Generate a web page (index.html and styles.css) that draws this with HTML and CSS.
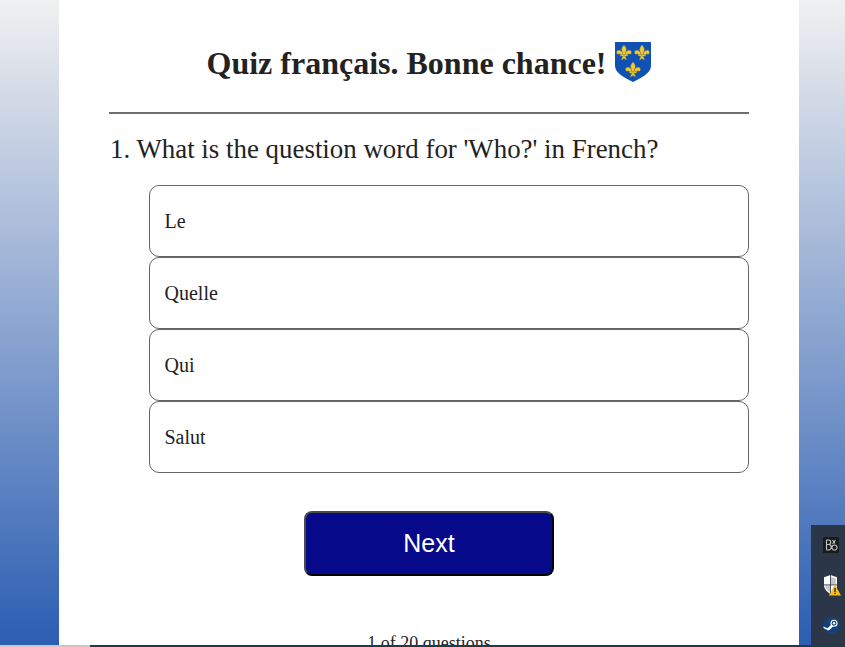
FILE: index.html
```html
<html lang="en">
  <head>
    <meta charset="UTF-8" />
    <title>Quiz français</title>
    <link rel="stylesheet" href="styles.css">
  </head>

  <body>
    <section class="quiz-container">
      <div class="quiz-container__heading">
        <h1>Quiz français. Bonne chance!</h1>
        <svg class="shield" viewBox="0 0 36 40" width="36" height="40">
          <defs>
            <g id="fleur" fill="#f0c92f" stroke="#a8872a" stroke-width="0.3">
              <path d="M0 -8 C2.6 -5.5 3 -3 1.3 0 L1.3 1.5 L-1.3 1.5 L-1.3 0 C-3 -3 -2.6 -5.5 0 -8 Z" />
              <path d="M-1.5 0.5 C-2.4 -3.4 -7.4 -3.8 -7.4 -0.6 C-7.4 1.2 -5.4 1.8 -4.7 0.6 C-4.4 2 -2.4 2 -1.5 1.2 Z" />
              <path d="M1.5 0.5 C2.4 -3.4 7.4 -3.8 7.4 -0.6 C7.4 1.2 5.4 1.8 4.7 0.6 C4.4 2 2.4 2 1.5 1.2 Z" />
              <path d="M-3.6 1.5 H3.6 V3 H-3.6 Z M-1.2 3 H1.2 L2.6 7 L0 5.6 L-2.6 7 Z" />
            </g>
          </defs>
          <path d="M0 0 H36 V24 C36 31 26 36 18 40 C10 36 0 31 0 24 Z" fill="#0f52b4" />
          <use href="#fleur" x="9" y="11" />
          <use href="#fleur" x="27" y="11" />
          <use href="#fleur" x="18" y="28" />
        </svg>
      </div>
      <hr class="divider" />
      <p class="question">1. What is the question word for 'Who?' in French?</p>
      <ul class="answers">
        <li class="answer">Le</li>
        <li class="answer">Quelle</li>
        <li class="answer">Qui</li>
        <li class="answer">Salut</li>
      </ul>
      <div class="actions">
        <button class="next-btn">Next</button>
      </div>
      <p class="progress">1 of 20 questions</p>
    </section>

    <div class="bottom-line"></div>

    <aside class="tray">
      <svg viewBox="0 0 16 16" width="16" height="16">
        <rect width="16" height="16" fill="#1b1b1d" />
        <path d="M3.5 3 V13 M3.5 3 H5.5 A2 2 0 0 1 5.5 7.5 H3.5 M5.5 7.5 A2.5 2.5 0 0 1 5.5 13 H3.5 M9.5 3 L12 6.5 M12.5 3 L9.5 7 M9 10.5 A2.5 2.5 0 1 0 14 10.5 A2.5 2.5 0 1 0 9 10.5" fill="none" stroke="#c4c4c4" stroke-width="1.1" />
      </svg>
      <svg viewBox="0 0 18 21" width="18" height="21">
        <path d="M7.5 0 L14 2.2 V10 C14 14 11 17 7.5 19 C4 17 1 14 1 10 V2.2 Z" fill="#fff" />
        <path d="M8 2 L12.8 3.4 V9.4 H8 Z M7 10.4 V17 C5 15.6 2.7 13.6 2.2 10.4 Z" fill="#28303e" opacity="0.28" />
        <path d="M7.5 0 V19 M1 9.9 H14" stroke="#1d2430" stroke-width="0.8" />
        <path d="M12 9.5 L18 20.5 H6 Z" fill="#f6bd1f" />
        <rect x="11.4" y="13" width="1.3" height="4" fill="#222" />
        <rect x="11.4" y="17.8" width="1.3" height="1.3" fill="#222" />
      </svg>
      <svg viewBox="0 0 17 17" width="17" height="17">
        <circle cx="8.5" cy="8.5" r="8.5" fill="#12427a" />
        <circle cx="11" cy="6.3" r="3" fill="none" stroke="#fff" stroke-width="1.1" />
        <circle cx="11" cy="6.3" r="1.2" fill="#fff" />
        <path d="M0.2 9.4 L4.6 11.2 L8.4 7.6 L10 9.6 L6.6 12.8 C5.4 13.8 4.2 13.2 3.6 12.4 L0.8 11.2 Z" fill="#fff" />
      </svg>
    </aside>
  </body>
</html>
```

FILE: styles.css
```css
* {
  box-sizing: border-box;
}
html,
body {
  height: 100%;
}
body {
  margin: 0;
  overflow: hidden;
  background: linear-gradient(to bottom, #f0f0f0 0%, #2a5db2 100%);
  font-family: "Liberation Serif", "Times New Roman", serif;
  color: #222;
}

.quiz-container {
  width: 740px;
  height: 100%;
  margin-left: 59px;
  padding: 0 50px;
  background-color: #fff;
}

.quiz-container__heading {
  display: flex;
  justify-content: center;
  align-items: flex-start;
  gap: 9px;
  padding-top: 42px;
}
.quiz-container__heading h1 {
  margin: 1px 0 0;
  font-size: 32px;
  line-height: 40px;
}

.divider {
  margin: 29px 0 0;
  border: 0;
  border-top: 2px solid #6e6e6e;
}

.question {
  margin: 18px 0 0;
  padding-left: 1px;
  font-size: 26.9px;
  line-height: 34px;
}

.answers {
  margin: 19px 0 0;
  padding: 0 0 0 40px;
  list-style: none;
}
.answer {
  display: flex;
  align-items: center;
  height: 72px;
  padding: 1px 0 0 14.5px;
  border: 1px solid #666;
  border-radius: 10px;
  font-size: 20px;
}

.actions {
  display: flex;
  justify-content: center;
  margin-top: 38px;
}
.next-btn {
  width: 250px;
  height: 65px;
  border: 2px solid;
  border-color: #4a4a4a #000 #000 #4a4a4a;
  border-radius: 8px;
  background-color: #060a8a;
  color: #fff;
  font-family: "Liberation Sans", Arial, sans-serif;
  font-size: 25px;
}

.progress {
  margin: 57px 0 0;
  text-align: center;
  font-size: 18px;
}

.bottom-line {
  position: fixed;
  left: 0;
  right: 0;
  bottom: 0;
  height: 2px;
  background: linear-gradient(to right, #c8c8c8 90px, #1f3a4a 90px);
}

.tray {
  position: fixed;
  right: 0;
  bottom: 2px;
  width: 34px;
  height: 120px;
  display: grid;
  grid-template-rows: repeat(3, 40px);
  align-items: center;
  padding-left: 12px;
  background-color: #2b3648;
}
```
